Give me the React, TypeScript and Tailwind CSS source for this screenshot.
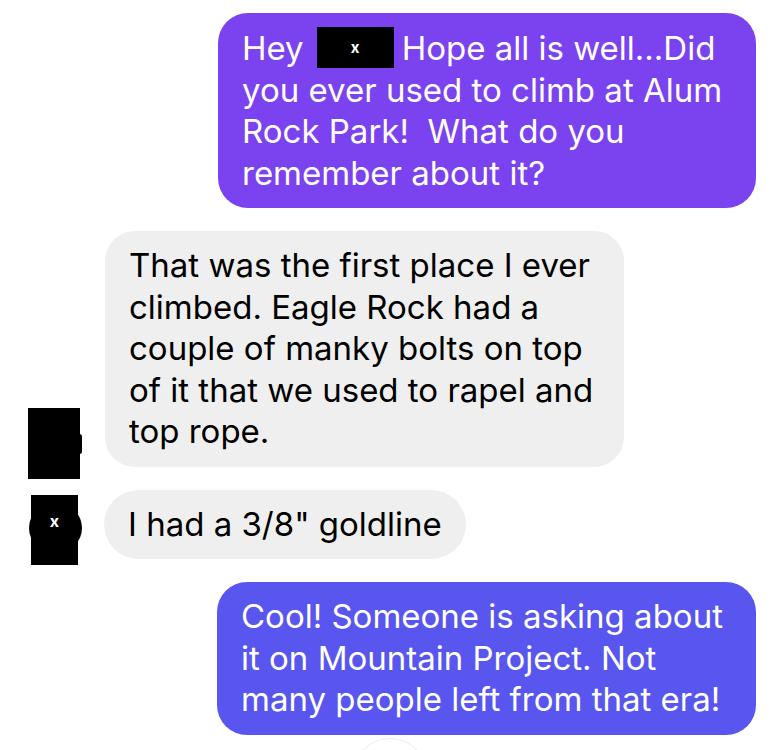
import React from 'react';

const font = { fontFamily: 'Inter, "Noto Sans", "Liberation Sans", sans-serif' };

function Redacted({ className }: { className?: string }) {
  return (
    <span className={'absolute bg-black flex justify-center ' + (className || '')}>
      <span className="text-white text-[16px] font-bold leading-none">x</span>
    </span>
  );
}

export default function App() {
  return (
    <div
      style={font}
      className="relative w-[771px] h-[750px] overflow-hidden bg-white flex flex-col pt-[13px] gap-[23px] text-[33px] leading-[41.5px] tracking-[0px]"
    >
      {/* outgoing */}
      <div className="flex justify-end pr-[15px]">
        <div className="w-[538px] rounded-[30px] bg-[#7b43ef] text-white px-[24px] py-[14px]">
          Hey
          <span className="relative inline-block w-[77px] h-[41px] align-[-8px] ml-[13px] mr-[8px] bg-black">
            <span className="absolute inset-0 flex items-center justify-center text-white text-[15px] font-bold leading-none">x</span>
          </span>
          Hope all is well...Did
          <br />
          you ever used to climb at Alum
          <br />
          Rock Park!&nbsp; What do you
          <br />
          remember about it?
        </div>
      </div>

      {/* incoming */}
      <div className="relative flex pl-[105px]">
        <div className="w-[519px] rounded-[30px] bg-[#efefef] text-black px-[24px] py-[14px]">
          That was the first place I ever
          <br />
          climbed. Eagle Rock had a
          <br />
          couple of manky bolts on top
          <br />
          of it that we used to rapel and
          <br />
          top rope.
        </div>
        <span className="absolute left-[77px] top-[203px] w-[5px] h-[20px] rounded-full bg-black" />
        <span className="absolute left-[28px] top-[177px] w-[52px] h-[71px] bg-black" />
      </div>

      <div className="relative flex pl-[104px]">
        <div className="rounded-full bg-[#efefef] text-black px-[24px] py-[14px]">
          I had a 3/8" goldline
        </div>
        <span className="absolute left-[29px] top-[14px] w-[53px] h-[48px] rounded-full bg-black" />
        <Redacted className="left-[31px] top-[5px] w-[47px] h-[70px] pt-[18px]" />
      </div>

      <div className="flex justify-end pr-[15px]">
        <div className="w-[539px] rounded-[30px] bg-[#5856ef] text-white px-[24px] py-[14px]">
          Cool! Someone is asking about
          <br />
          it on Mountain Project. Not
          <br />
          many people left from that era!
        </div>
      </div>

      <span className="absolute left-[352px] top-[738px] w-[76px] h-[76px] rounded-full border border-[#eeeeee] bg-white" />
    </div>
  );
}
